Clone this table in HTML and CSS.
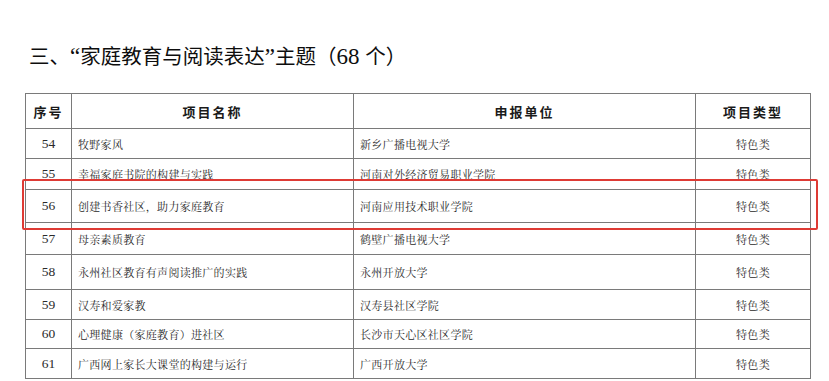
FILE: index.html
```html
<!DOCTYPE html>
<html lang="zh-CN">
<head>
<meta charset="utf-8">
<link rel="stylesheet" href="styles.css">
</head>
<body>
<h1 class="title">三、<span class="lat">“</span>家庭教育与阅读表达<span class="lat">”</span>主题（<span class="lat">68 </span>个）</h1>
<table class="grid">
  <colgroup>
    <col class="c-no"><col class="c-name"><col class="c-unit"><col class="c-type">
  </colgroup>
  <thead>
    <tr><th>序号</th><th>项目名称</th><th>申报单位</th><th>项目类型</th></tr>
  </thead>
  <tbody>
    <tr><td class="no">54</td><td class="txt">牧野家风</td><td class="txt">新乡广播电视大学</td><td class="typ">特色类</td></tr>
    <tr><td class="no">55</td><td class="txt">幸福家庭书院的构建与实践</td><td class="txt">河南对外经济贸易职业学院</td><td class="typ">特色类</td></tr>
    <tr><td class="no">56</td><td class="txt">创建书香社区，助力家庭教育</td><td class="txt">河南应用技术职业学院</td><td class="typ">特色类</td></tr>
    <tr><td class="no">57</td><td class="txt">母亲素质教育</td><td class="txt">鹤壁广播电视大学</td><td class="typ">特色类</td></tr>
    <tr><td class="no">58</td><td class="txt">永州社区教育有声阅读推广的实践</td><td class="txt">永州开放大学</td><td class="typ">特色类</td></tr>
    <tr><td class="no">59</td><td class="txt">汉寿和爱家教</td><td class="txt">汉寿县社区学院</td><td class="typ">特色类</td></tr>
    <tr><td class="no">60</td><td class="txt">心理健康（家庭教育）进社区</td><td class="txt">长沙市天心区社区学院</td><td class="typ">特色类</td></tr>
    <tr><td class="no">61</td><td class="txt">广西网上家长大课堂的构建与运行</td><td class="txt">广西开放大学</td><td class="typ">特色类</td></tr>
  </tbody>
</table>
<div class="highlight"></div>
</body>
</html>
```

FILE: styles.css
```css
html, body {
  margin: 0;
  padding: 0;
  background: #ffffff;
}
body {
  width: 829px;
  height: 381px;
  overflow: hidden;
  position: relative;
}
.title {
  margin: 40px 0 0 29px;
  height: 30px;
  line-height: 30px;
  font-family: "Noto Sans CJK SC", sans-serif;
  font-weight: 400;
  font-size: 20.5px;
  color: #0d0d0d;
  white-space: nowrap;
}
.title .lat {
  font-family: "Liberation Serif", serif;
  font-weight: 400;
  font-size: 23px;
}
.grid {
  margin: 23px 0 0 25px;
  border-collapse: collapse;
  table-layout: fixed;
  width: 785px;
  color: #222;
}
.c-no { width: 46px; }
.c-name { width: 282px; }
.c-unit { width: 342px; }
.c-type { width: 115px; }
.grid th, .grid td {
  border: 1px solid #7a7a7a;
  padding: 0;
  vertical-align: middle;
  white-space: nowrap;
}
.grid th {
  height: 34px;
  font-family: "Noto Sans CJK SC", sans-serif;
  font-weight: 700;
  font-size: 13px;
  letter-spacing: 2px;
  text-align: center;
  color: #1a1a1a;
}
.grid td {
  font-family: "Noto Serif CJK SC", "Noto Sans CJK SC", serif;
  font-size: 11px;
  letter-spacing: 0.3px;
  color: #2a2a2a;
}
.grid td.no {
  font-family: "Liberation Serif", serif;
  font-size: 13.5px;
  letter-spacing: 0;
  text-align: center;
}
.grid td.txt {
  padding-left: 6px;
}
.grid td.typ {
  text-align: center;
}
.grid tbody tr:nth-child(1) td { height: 29px; }
.grid tbody tr:nth-child(2) td { height: 30px; }
.grid tbody tr:nth-child(3) td { height: 32px; }
.grid tbody tr:nth-child(4) td { height: 31px; }
.grid tbody tr:nth-child(5) td { height: 34px; }
.grid tbody tr:nth-child(6) td { height: 29px; }
.grid tbody tr:nth-child(7) td { height: 28px; }
.grid tbody tr:nth-child(8) td { height: 29px; }
.highlight {
  position: absolute;
  left: 22px;
  top: 179px;
  width: 792px;
  height: 47px;
  border: 2px solid #de3b35;
  border-radius: 2px;
}
```
